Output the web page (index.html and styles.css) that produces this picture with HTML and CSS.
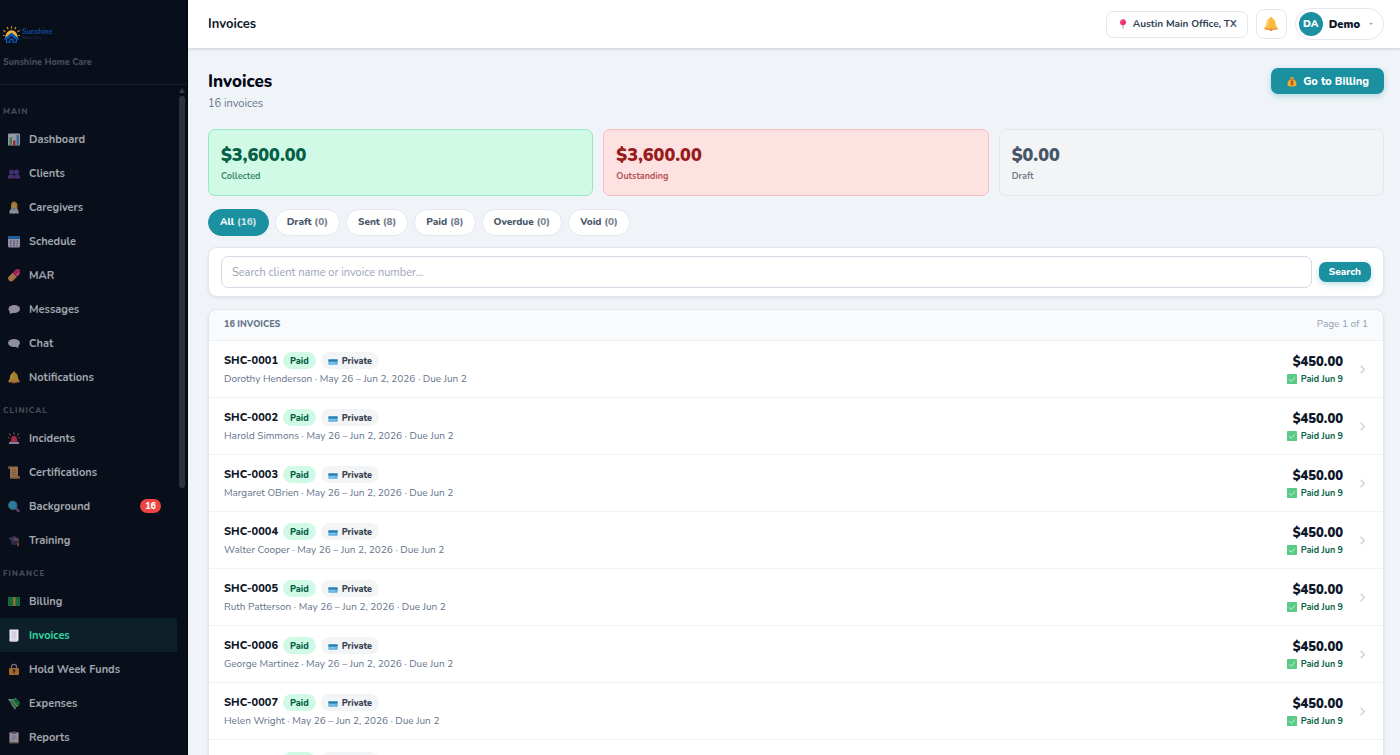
FILE: index.html
```html
<!DOCTYPE html>
<html lang="en">
<head>
<meta charset="utf-8">
<meta name="viewport" content="width=device-width, initial-scale=1">
<title>Invoices</title>
<link rel="stylesheet" href="styles.css">
</head>
<body>
<svg class="sprite" aria-hidden="true">
  <symbol id="i-chart" viewBox="0 0 24 24"><rect x="0" y="0" width="24" height="24" rx="2" fill="#e4e6ee"/><path d="M0 8h24M0 16h24" stroke="#b9c6d6" stroke-width="1"/><rect x="3" y="8" width="5" height="16" fill="#5fb56a"/><rect x="10" y="14" width="5" height="10" fill="#e0305c"/><rect x="17" y="3" width="5" height="21" fill="#4f9ad8"/></symbol>
  <symbol id="i-people" viewBox="0 0 24 24"><g fill="#65439c"><circle cx="7" cy="9" r="5"/><circle cx="17" cy="9" r="5"/><path d="M0 22v-3c0-4 3-5 6-5s6 1 6 5v3z"/><path d="M12 22v-3c0-4 3-5 6-5s6 1 6 5v3z"/></g><path d="M12 14v8" stroke="#35235c" stroke-width="1.5"/></symbol>
  <symbol id="i-carer" viewBox="0 0 24 24"><path d="M6 13V7c0-4 3-7 6-7s7 3 7 7v8H6z" fill="#e8a82c"/><circle cx="12" cy="9" r="4.5" fill="#f5b970"/><path d="M3 24v-4c0-4 4-6 9-6s9 2 9 6v4z" fill="#e6e6f0"/><path d="M9 14l3 5 3-5z" fill="#5fa0d8"/><path d="M8 16v8M16 16v8" stroke="#8a8fa5" stroke-width="1.5"/></symbol>
  <symbol id="i-calendar" viewBox="0 0 24 24"><rect x="0" y="1" width="24" height="23" rx="3" fill="#d9d4ea"/><path d="M0 7V4a3 3 0 0 1 3-3h18a3 3 0 0 1 3 3v3z" fill="#2a86e0"/><path d="M4 11h3M10 11h4M17 11h3M4 15.500h3M10 15.500h4M17 15.500h3M4 20h3M10 20h4M17 20h3" stroke="#8c80a8" stroke-width="2.500"/></symbol>
  <symbol id="i-pill" viewBox="0 0 24 24"><g transform="rotate(45 12 12)"><path d="M6 12V4a6 6 0 0 1 12 0v8z" transform="translate(0 -2)" fill="#ee2f6c"/><path d="M6 10h12v10a6 6 0 0 1-12 0z" fill="#f7a35c"/><path d="M15.500 3v4" stroke="#ffb5cc" stroke-width="2" stroke-linecap="round"/></g></symbol>
  <symbol id="i-speech" viewBox="0 0 24 24"><ellipse cx="12.500" cy="11" rx="11.500" ry="8" fill="#d8d2e6"/><path d="M3 15l1 6 8-3z" fill="#d8d2e6"/></symbol>
  <symbol id="i-chat" viewBox="0 0 24 24"><ellipse cx="12" cy="11" rx="12" ry="8" fill="#d8d2e6"/><path d="M21 15v6l-8-3z" fill="#d8d2e6"/></symbol>
  <symbol id="i-bell" viewBox="0 0 24 24"><path d="M12 0c1.500 0 2.500 1 2.500 2.500C18 4 19.500 7 20 12c.3 3 1.500 5 3.500 7H.5c2-2 3.200-4 3.500-7 .5-5 2-8 5.500-9.500C9.500 1 10.500 0 12 0z" fill="#fabb3c"/><path d="M.5 19h23v2c-3 2-20 2-23 0z" fill="#f5a04a"/><path d="M9 21h6c0 4-6 4-6 0z" fill="#e07f45"/><path d="M8 6c-1.500 3-1.500 6-2.500 10" stroke="#ffdf70" stroke-width="2" fill="none"/></symbol>
  <symbol id="i-siren" viewBox="0 0 24 24"><path d="M5 19l2-10c.5-3 9.500-3 10 0l2 10z" fill="#f23b62"/><path d="M2 19h20v4H2z" fill="#c9bedd"/><path d="M12 4V0M5 6L2.500 2M19 6l2.500-4M3 11l-2-1M21 11l2-1" stroke="#e8a090" stroke-width="2"/></symbol>
  <symbol id="i-scroll" viewBox="0 0 24 24"><path d="M1 0h19v19h3v5H6c-2 0-2-2-2-4V5H1z" fill="#dfa266"/><path d="M8 8h8M8 12h8M8 16h8" stroke="#b57d47" stroke-width="1.500"/><path d="M1 0h3v5H1z" fill="#b87a42"/><path d="M8 20h15v4H6c2-1 2-2 2-4z" fill="#c48a52"/></symbol>
  <symbol id="i-magnify" viewBox="0 0 24 24"><path d="M15 15l6 6" stroke="#8a5f9c" stroke-width="5" stroke-linecap="round"/><circle cx="9.500" cy="9.500" r="8.500" fill="#3fb4e6" stroke="#5d8fac" stroke-width="2"/></symbol>
  <symbol id="i-cap" viewBox="0 0 24 24"><path d="M6 12v7c3 3 9 3 12 0v-7z" fill="#443559"/><path d="M0 8l13-5 11 6-12 6z" fill="#57456e"/><path d="M12 9l8 2v8" stroke="#e08a5a" stroke-width="1.800" fill="none"/><path d="M18.500 18h3v5h-3z" fill="#e08a5a"/></symbol>
  <symbol id="i-cash" viewBox="0 0 24 24"><rect x="0" y="3" width="24" height="18" fill="#26a35a"/><rect x="3" y="6" width="18" height="12" fill="none" stroke="#127a3c" stroke-width="1.500"/><circle cx="12" cy="12" r="4" fill="#127a3c"/><rect x="10" y="3" width="5" height="18" fill="#d8a940"/></symbol>
  <symbol id="i-receipt" viewBox="0 0 24 24"><path d="M3 0h18v20c0 2-1 4-3 4H5c-2 0-2-2-2-4z" fill="#eeeaf6"/><path d="M7 5h10M7 9h10M7 13h10M7 17h10" stroke="#a9a3bb" stroke-width="1.500"/><path d="M3 20h15v4H5c-2 0-2-2-2-4z" fill="#d3cde2"/></symbol>
  <symbol id="i-lock" viewBox="0 0 24 24"><path d="M7 11V6c0-6 10-6 10 0v5" fill="none" stroke="#b0a0b8" stroke-width="2.500"/><rect x="2" y="9" width="20" height="14" rx="2" fill="#f09a36"/><circle cx="12" cy="14" r="2.500" fill="#4a2a3a"/><path d="M11 15h2v5h-2z" fill="#4a2a3a"/></symbol>
  <symbol id="i-wings" viewBox="0 0 24 24"><path d="M0 3l10 0 3 5-3 4 6 9-2 3-7-9-2-5z" fill="#c6bfd6"/><path d="M4 7l11-7 9 10-3 7-8 3z" fill="#26a35a"/><path d="M8 4l11 15" stroke="#e0c060" stroke-width="2"/><circle cx="16" cy="8" r="2.500" fill="#127a3c"/></symbol>
  <symbol id="i-clipboard" viewBox="0 0 24 24"><rect x="2" y="1" width="20" height="23" rx="2" fill="#9c7468"/><path d="M4 3h16v18H4z" fill="#ddd8ea"/><path d="M8 0h8v5H8z" fill="#7c728c"/><path d="M7 9h10M7 13h10M7 17h6" stroke="#8d86a3" stroke-width="1.500"/></symbol>
  <symbol id="i-pin" viewBox="0 0 24 24"><path d="M11 11h2.500v12l-1.200 1-1.300-1z" fill="#9aa0ac"/><circle cx="12" cy="7.500" r="7" fill="#f0286c"/><circle cx="9.500" cy="5" r="2" fill="#ff8fb4"/></symbol>
  <symbol id="i-bag" viewBox="0 0 24 24"><path d="M8 1l4 1.500L16 1l-1 6H9z" fill="#f5b33c"/><path d="M9 6h6c5 3 8 8 8 12 0 5-4 6-11 6S1 23 1 18c0-4 3-9 8-12z" fill="#f5a92e"/><path d="M8 6.500h8" stroke="#a85a20" stroke-width="2"/><path d="M15 12c-1-1.500-6-1.500-6 1s6 1.500 6 4-5 2.500-6 1M12 9.500v12" fill="none" stroke="#8a4518" stroke-width="2"/></symbol>
  <symbol id="i-card" viewBox="0 0 24 24"><rect x="1" y="7" width="22" height="14" rx="1" fill="#55aee0"/><path d="M1 9h22v4H1z" fill="#2f789f"/><path d="M4 16.500h14" stroke="#a5d5ee" stroke-width="2"/></symbol>
  <symbol id="i-check" viewBox="0 0 24 24"><rect x="0" y="0" width="24" height="24" rx="1" fill="#5acb86"/><path d="M5 12.500l5 5L19.500 8" fill="none" stroke="#e6f8ed" stroke-width="2"/></symbol>
  <symbol id="i-chevron" viewBox="0 0 24 24"><path d="M8 4l8 8-8 8" fill="none" stroke="#cbd2dc" stroke-width="3"/></symbol>
</svg>
<div class="app">
  <aside class="sidebar">
    <div class="brand">
      <div class="logo">
        <svg class="logo-mark" viewBox="0 0 48 48" aria-hidden="true"><g stroke="#e8a326" stroke-width="3" stroke-linecap="round"><path d="M24 6V2M14 8l-2-4M34 8l2-4M6 16l-4-3M42 16l4-3M3 27H1M45 27h2"/></g><path d="M6 34a18 22 0 0 1 36 0l-18-14z" fill="#f3b233"/><path d="M4 38l20-17 20 17" fill="none" stroke="#0f5fc0" stroke-width="4"/><path d="M10 46V38l14-12 14 12v8H28V37h-8v9z" fill="#08162e" stroke="#0f5fc0" stroke-width="3"/></svg>
        <span class="logo-words"><b>Sunshine</b><small>Home Care</small></span>
      </div>
      <p>Sunshine Home Care</p>
    </div>
    <div class="nav-wrap">
      <nav class="nav">
        <h2>MAIN</h2>
        <a href="#" class="hover"><svg><use href="#i-chart"/></svg>Dashboard</a>
        <a href="#"><svg><use href="#i-people"/></svg>Clients</a>
        <a href="#"><svg><use href="#i-carer"/></svg>Caregivers</a>
        <a href="#"><svg><use href="#i-calendar"/></svg>Schedule</a>
        <a href="#"><svg><use href="#i-pill"/></svg>MAR</a>
        <a href="#"><svg><use href="#i-speech"/></svg>Messages</a>
        <a href="#"><svg><use href="#i-chat"/></svg>Chat</a>
        <a href="#"><svg><use href="#i-bell"/></svg>Notifications</a>
        <h2>CLINICAL</h2>
        <a href="#"><svg><use href="#i-siren"/></svg>Incidents</a>
        <a href="#"><svg><use href="#i-scroll"/></svg>Certifications</a>
        <a href="#"><svg><use href="#i-magnify"/></svg>Background<span class="count">16</span></a>
        <a href="#"><svg><use href="#i-cap"/></svg>Training</a>
        <h2>FINANCE</h2>
        <a href="#"><svg><use href="#i-cash"/></svg>Billing</a>
        <a href="#" class="active" aria-current="page"><svg><use href="#i-receipt"/></svg>Invoices</a>
        <a href="#"><svg><use href="#i-lock"/></svg>Hold Week Funds</a>
        <a href="#"><svg><use href="#i-wings"/></svg>Expenses</a>
        <a href="#"><svg><use href="#i-clipboard"/></svg>Reports</a>
      </nav>
      <div class="scroll"><i class="scroll-up"></i><i class="scroll-thumb"></i></div>
    </div>
  </aside>
  <div class="page">
    <header class="topbar">
      <strong>Invoices</strong>
      <div class="tools">
        <button class="office"><svg><use href="#i-pin"/></svg>Austin Main Office, TX</button>
        <button class="bell" aria-label="Notifications"><svg><use href="#i-bell"/></svg></button>
        <button class="user"><span class="avatar">DA</span>Demo<i class="caret"></i></button>
      </div>
    </header>
    <main class="content">
      <div class="heading">
        <div><h1>Invoices</h1><p>16 invoices</p></div>
        <button class="primary"><svg><use href="#i-bag"/></svg>Go to Billing</button>
      </div>
      <section class="stats">
        <div class="stat collected"><b>$3,600.00</b><span>Collected</span></div>
        <div class="stat outstanding"><b>$3,600.00</b><span>Outstanding</span></div>
        <div class="stat draft"><b>$0.00</b><span>Draft</span></div>
      </section>
      <div class="tabs">
        <button class="on">All <span>(16)</span></button>
        <button>Draft <span>(0)</span></button>
        <button>Sent <span>(8)</span></button>
        <button>Paid <span>(8)</span></button>
        <button>Overdue <span>(0)</span></button>
        <button>Void <span>(0)</span></button>
      </div>
      <form class="search">
        <input type="text" aria-label="Search invoices" placeholder="Search client name or invoice number...">
        <button type="button" class="primary small">Search</button>
      </form>
      <section class="list">
        <div class="list-head"><h3>16 INVOICES</h3><span>Page 1 of 1</span></div>
        <a href="#" class="row"><div class="info"><div class="line"><b>SHC-0001</b><span class="tag paid">Paid</span><span class="tag"><svg><use href="#i-card"/></svg>Private</span></div><p>Dorothy Henderson · May 26 – Jun 2, 2026 · Due Jun 2</p></div><div class="amount"><b>$450.00</b><span><svg><use href="#i-check"/></svg>Paid Jun 9</span></div><svg class="go"><use href="#i-chevron"/></svg></a>
        <a href="#" class="row"><div class="info"><div class="line"><b>SHC-0002</b><span class="tag paid">Paid</span><span class="tag"><svg><use href="#i-card"/></svg>Private</span></div><p>Harold Simmons · May 26 – Jun 2, 2026 · Due Jun 2</p></div><div class="amount"><b>$450.00</b><span><svg><use href="#i-check"/></svg>Paid Jun 9</span></div><svg class="go"><use href="#i-chevron"/></svg></a>
        <a href="#" class="row"><div class="info"><div class="line"><b>SHC-0003</b><span class="tag paid">Paid</span><span class="tag"><svg><use href="#i-card"/></svg>Private</span></div><p>Margaret OBrien · May 26 – Jun 2, 2026 · Due Jun 2</p></div><div class="amount"><b>$450.00</b><span><svg><use href="#i-check"/></svg>Paid Jun 9</span></div><svg class="go"><use href="#i-chevron"/></svg></a>
        <a href="#" class="row"><div class="info"><div class="line"><b>SHC-0004</b><span class="tag paid">Paid</span><span class="tag"><svg><use href="#i-card"/></svg>Private</span></div><p>Walter Cooper · May 26 – Jun 2, 2026 · Due Jun 2</p></div><div class="amount"><b>$450.00</b><span><svg><use href="#i-check"/></svg>Paid Jun 9</span></div><svg class="go"><use href="#i-chevron"/></svg></a>
        <a href="#" class="row"><div class="info"><div class="line"><b>SHC-0005</b><span class="tag paid">Paid</span><span class="tag"><svg><use href="#i-card"/></svg>Private</span></div><p>Ruth Patterson · May 26 – Jun 2, 2026 · Due Jun 2</p></div><div class="amount"><b>$450.00</b><span><svg><use href="#i-check"/></svg>Paid Jun 9</span></div><svg class="go"><use href="#i-chevron"/></svg></a>
        <a href="#" class="row"><div class="info"><div class="line"><b>SHC-0006</b><span class="tag paid">Paid</span><span class="tag"><svg><use href="#i-card"/></svg>Private</span></div><p>George Martinez · May 26 – Jun 2, 2026 · Due Jun 2</p></div><div class="amount"><b>$450.00</b><span><svg><use href="#i-check"/></svg>Paid Jun 9</span></div><svg class="go"><use href="#i-chevron"/></svg></a>
        <a href="#" class="row"><div class="info"><div class="line"><b>SHC-0007</b><span class="tag paid">Paid</span><span class="tag"><svg><use href="#i-card"/></svg>Private</span></div><p>Helen Wright · May 26 – Jun 2, 2026 · Due Jun 2</p></div><div class="amount"><b>$450.00</b><span><svg><use href="#i-check"/></svg>Paid Jun 9</span></div><svg class="go"><use href="#i-chevron"/></svg></a>
        <div class="row next"><i></i><i></i></div>
      </section>
    </main>
  </div>
</div>
</body>
</html>
```
FILE: styles.css
```css
* { box-sizing: border-box; }
body, h1, h2, h3, p { margin: 0; }
body {
  font-family: "Nunito", "Open Sans", "Noto Sans", sans-serif;
  font-size: 10px;
  color: #0f172a;
  background: #f0f4f9;
}
button, input { font: inherit; color: inherit; }
a { color: inherit; text-decoration: none; }
svg { flex: none; }
.sprite { display: none; }

.app { display: flex; height: 100vh; overflow: hidden; }

/* Sidebar */
.sidebar {
  flex: none;
  width: 188px;
  display: flex;
  flex-direction: column;
  background: #080e1a;
  border-right: 1px solid #02050c;
}
.brand { padding: 24px 3px 15px; border-bottom: 1px solid #161d29; }
.brand p { margin-top: 11px; font-size: 9px; line-height: 14px; font-weight: 800; color: #454b57; }
.logo { display: flex; align-items: center; gap: 2px; height: 20px; }
.logo-mark { width: 17px; height: 17px; }
.logo-words { display: flex; flex-direction: column; color: #0e4690; }
.logo-words b { font-size: 7px; line-height: 8px; font-weight: 800; }
.logo-words small { font-size: 4px; line-height: 4px; color: #2b3c58; }
.nav-wrap { flex: 1; min-height: 0; display: flex; }
.nav { flex: 1; min-width: 0; overflow: hidden; padding-top: 10px; }
.nav h2 {
  padding: 11px 3px 4px;
  font-size: 8px;
  line-height: 12px;
  font-weight: 800;
  letter-spacing: 1px;
  color: #474d58;
}
.nav a {
  display: flex;
  align-items: center;
  height: 34px;
  padding: 0 16px 0 8px;
  gap: 9px;
  font-size: 11px;
  font-weight: 700;
  color: #a2a6ae;
}
.nav svg { width: 12px; height: 13px; opacity: .65; }
.nav .hover { background: #0a101b; }
.nav .active { background: #0d2029; color: #34d8a2; }
.nav .active svg { opacity: 1; }
.count {
  margin-left: auto;
  padding: 0 5px;
  border-radius: 8px;
  background: #ef4444;
  color: #fff;
  font-size: 9px;
  line-height: 14px;
  font-weight: 800;
}
.scroll { width: 10px; padding: 3px 2px; display: flex; flex-direction: column; align-items: center; gap: 3px; }
.scroll-up { border: 3px solid transparent; border-top: 0; border-bottom: 5px solid #363b47; }
.scroll-thumb { width: 6px; height: 59%; border-radius: 3px; background: #2c313e; }

/* Page */
.page { flex: 1; min-width: 0; display: flex; flex-direction: column; }
.topbar {
  flex: none;
  height: 48px;
  padding: 0 16px 0 20px;
  display: flex;
  align-items: center;
  justify-content: space-between;
  background: #fff;
  box-shadow: 0 1px 3px rgba(15, 23, 42, .18);
}
.topbar strong { font-size: 13px; font-weight: 700; }
.tools { display: flex; align-items: center; gap: 8px; }
.tools button { display: flex; align-items: center; background: #fff; border: 1px solid #e3e8ef; }
.office { height: 27px; padding: 0 10px 0 11px; gap: 5px; border-radius: 7px; font-weight: 700; color: #334155; }
.office svg { width: 10px; height: 10px; }
.bell { width: 31px; height: 30px; justify-content: center; padding: 0; border-radius: 8px; }
.bell svg { width: 14px; height: 14px; }
.user { height: 32px; padding: 0 10px 0 3px; gap: 6px; border-radius: 16px; font-size: 11px; font-weight: 900; }
.avatar {
  width: 24px;
  height: 24px;
  border-radius: 50%;
  background: #1b90a0;
  color: #fff;
  font-size: 10px;
  line-height: 24px;
  text-align: center;
}
.caret { margin-left: 3px; border: 2px solid transparent; border-bottom: 0; border-top-color: #94a3b8; }

.content { flex: 1; min-height: 0; overflow: hidden; padding: 20px 16px 0 20px; }
.heading { display: flex; justify-content: space-between; align-items: flex-start; }
.heading h1 { font-size: 17px; line-height: 27px; font-weight: 800; color: #020617; }
.heading p { font-size: 11px; line-height: 18px; color: #64748b; }
.primary {
  display: flex;
  align-items: center;
  gap: 6px;
  height: 26px;
  padding: 0 15px 0 16px;
  border: 0;
  border-radius: 7px;
  background: #1b90a0;
  color: #fff;
  font-size: 11px;
  font-weight: 800;
  box-shadow: 0 2px 6px rgba(27, 144, 160, .3);
}
.primary svg { width: 10px; height: 11px; }
.primary.small { height: 20px; padding: 0 10px; font-size: 10px; }

.stats { display: grid; grid-template-columns: repeat(3, 1fr); gap: 10px; margin-top: 16px; }
.stat { display: flex; flex-direction: column; padding: 12px 12px 10px; border: 1px solid; border-radius: 7px; }
.stat b { font-size: 18px; line-height: 26px; font-weight: 900; }
.stat span { font-size: 9px; line-height: 17px; font-weight: 700; opacity: .75; }
.collected { background: #d0fae5; border-color: #96e8c4; color: #065f46; }
.outstanding { background: #fee2e2; border-color: #f6bcc0; color: #991b1b; }
.draft { background: #f3f4f6; border-color: #e3e8ee; color: #475569; }

.tabs { display: flex; gap: 6px; margin-top: 13px; }
.tabs button {
  height: 27px;
  padding: 0 11px 1px;
  border: 1px solid #e3e8ef;
  border-radius: 14px;
  background: #fff;
  font-size: 10px;
  font-weight: 800;
  color: #475569;
}
.tabs span { opacity: .75; }
.tabs .on { background: #1b90a0; border-color: #1b90a0; color: #fff; }

.search, .list {
  background: #fff;
  border: 1px solid #e1e7ee;
  border-radius: 9px;
  box-shadow: 0 1px 3px rgba(15, 23, 42, .1);
}
.search { display: flex; align-items: center; gap: 7px; margin-top: 11px; padding: 8px 12px; }
.search input {
  flex: 1;
  min-width: 0;
  height: 32px;
  padding: 0 10px;
  border: 1px solid #d3dbe5;
  border-radius: 7px;
  background: #fff;
  font-size: 11px;
}
.search input::placeholder { color: #9aa3b5; opacity: 1; }

.list { margin-top: 12px; overflow: hidden; }
.list-head {
  display: flex;
  align-items: center;
  justify-content: space-between;
  height: 31px;
  padding: 0 15px 2px;
  background: #f8fafc;
  border-bottom: 1px solid #edf1f5;
}
.list-head h3 { font-size: 9px; font-weight: 800; color: #64748b; }
.list-head span { font-size: 10px; color: #94a3b8; }
.row {
  display: flex;
  align-items: center;
  min-height: 57px;
  padding: 9px 15px;
  border-bottom: 1px solid #eff3f7;
}
.info { flex: 1; min-width: 0; }
.line { display: flex; align-items: center; gap: 5px; height: 20px; }
.line b { font-size: 11px; font-weight: 800; }
.info p { font-size: 10px; line-height: 17px; color: #64748b; }
.tag {
  display: flex;
  align-items: center;
  gap: 4px;
  height: 17px;
  padding: 0 7px;
  border-radius: 9px;
  background: #f3f4f6;
  color: #374151;
  font-size: 9px;
  font-weight: 800;
}
.tag svg { width: 10px; height: 10px; }
.tag.paid { background: #d0fae5; color: #065f46; }
.amount { display: flex; flex-direction: column; align-items: flex-end; padding-top: 2px; }
.amount b { font-size: 13px; line-height: 18px; font-weight: 900; }
.amount span { display: flex; align-items: center; gap: 4px; font-size: 9px; line-height: 16px; font-weight: 700; color: #065f46; }
.amount svg { width: 10px; height: 10px; }
.go { width: 11px; height: 11px; margin-left: 14px; }

/* Row that starts below the fold */
.row.next { align-items: flex-start; gap: 5px; padding: 12px 15px 9px 74px; }
.next i { width: 32px; height: 17px; border-radius: 9px; background: #d0fae5; }
.next i + i { width: 59px; background: #f3f4f6; }
```
